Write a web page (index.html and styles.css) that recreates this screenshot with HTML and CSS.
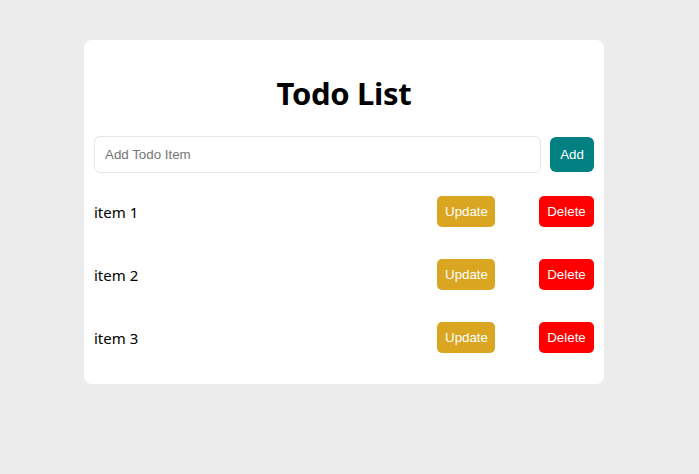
FILE: index.html
```html
<!DOCTYPE html>
<html lang="en">
<head>
<meta charset="utf-8">
<title>Todo List</title>
<link rel="stylesheet" href="styles.css">
</head>
<body>
<div class="page">
  <div class="card">
    <h1 class="title">Todo List</h1>
    <form class="add-form">
      <input class="add-input" type="text" placeholder="Add Todo Item">
      <button class="btn btn-add" type="button">Add</button>
    </form>
    <ul class="todo-list">
      <li class="todo-item">
        <span class="todo-text">item 1</span>
        <button class="btn btn-update" type="button">Update</button>
        <button class="btn btn-delete" type="button">Delete</button>
      </li>
      <li class="todo-item">
        <span class="todo-text">item 2</span>
        <button class="btn btn-update" type="button">Update</button>
        <button class="btn btn-delete" type="button">Delete</button>
      </li>
      <li class="todo-item">
        <span class="todo-text">item 3</span>
        <button class="btn btn-update" type="button">Update</button>
        <button class="btn btn-delete" type="button">Delete</button>
      </li>
    </ul>
  </div>
</div>
</body>
</html>
```

FILE: styles.css
```css
* { box-sizing: border-box; }

html, body {
  margin: 0;
  padding: 0;
  background: #ececec;
  height: 100%;
}

body {
  font-family: "Noto Sans", "Open Sans", sans-serif;
  color: #000;
}

.page {
  padding: 40px 0 0 84px;
}

.card {
  width: 520px;
  background: #fff;
  border-radius: 8px;
  padding: 10px;
}

.title {
  margin: 22px 0 21px;
  height: 43px;
  line-height: 43px;
  font-size: 31px;
  font-weight: 700;
  text-align: center;
  letter-spacing: -0.3px;
}

.add-form {
  display: flex;
  align-items: center;
  gap: 9px;
  margin: 0;
}

.add-input {
  flex: 1;
  height: 37px;
  border: 1px solid #e6e6e6;
  border-radius: 6px;
  padding: 0 10px;
  font-family: "Liberation Sans", Arial, sans-serif;
  font-size: 13.333px;
  color: #000;
  outline: none;
}

.add-input::placeholder {
  color: #757575;
}

.btn {
  border: none;
  color: #fff;
  font-family: "Liberation Sans", Arial, sans-serif;
  font-size: 13.333px;
  line-height: 15px;
  cursor: pointer;
}

.btn-add {
  background: #008080;
  padding: 10px;
  border-radius: 6px;
  height: 35px;
  width: 44px;
}

.todo-list {
  list-style: none;
  margin: 23px 0 21px;
  padding: 0;
  display: flex;
  flex-direction: column;
  gap: 32px;
}

.todo-item {
  display: flex;
  align-items: center;
  height: 31px;
}

.todo-text {
  flex: 1;
  font-size: 15px;
}

.btn-update,
.btn-delete {
  height: 31px;
  padding: 8px;
  border-radius: 5px;
}

.btn-update {
  background: #daa520;
  width: 58px;
}

.btn-delete {
  background: #ff0000;
  width: 55px;
  margin-left: 44px;
}
```
